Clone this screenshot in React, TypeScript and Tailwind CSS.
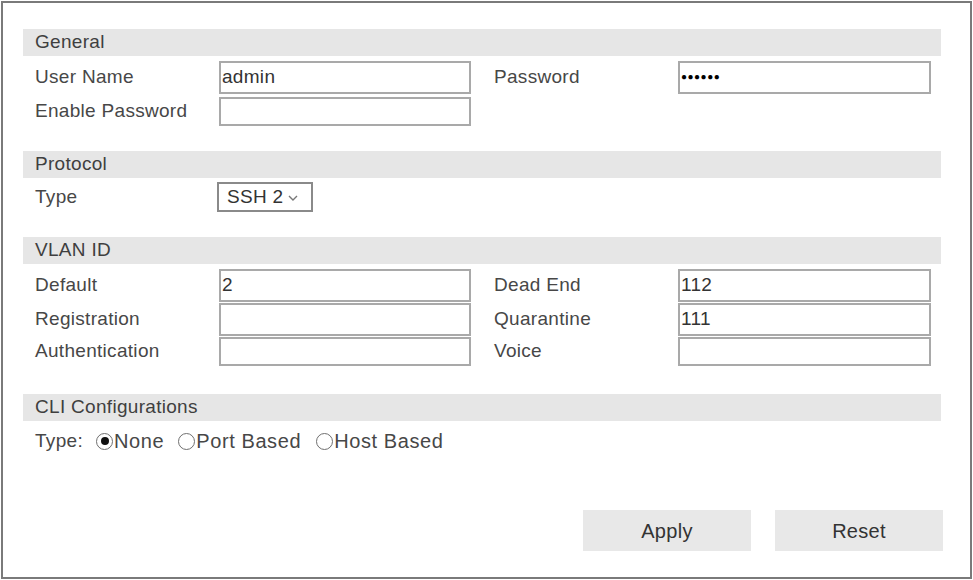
import React from "react";

const Bar = ({ title, className = "" }: { title: string; className?: string }) => (
  <div className={`h-[27px] w-[918px] bg-[#e6e6e6] pl-[12px] flex items-center text-[#3f3f3f] ${className}`}>
    {title}
  </div>
);

const Input = ({ value = "", dots = false }: { value?: string; dots?: boolean }) => (
  <div className="h-full w-full border-2 border-[#a9a9a9] bg-white flex items-center pl-[1px] text-[#333]">
    {dots ? <span className="text-[10px] tracking-[0.5px] text-black leading-none">●●●●●●</span> : value}
  </div>
);

const Row = ({
  l1,
  v1,
  l2,
  v2,
  h,
  dots,
  right = true,
}: {
  l1: string;
  v1?: string;
  l2?: string;
  v2?: string;
  h: string;
  dots?: boolean;
  right?: boolean;
}) => (
  <div className={`grid grid-cols-[184px_252px_23px_184px_253px] pl-[12px] items-center ${h}`}>
    <div>{l1}</div>
    <div className="h-full">
      <Input value={v1} />
    </div>
    <div />
    <div>{l2}</div>
    <div className="h-full">{right && <Input value={v2} dots={dots} />}</div>
  </div>
);

const Radio = ({ checked, label }: { checked?: boolean; label: string }) => (
  <div className="flex items-center">
    <span className="w-[17px] h-[17px] rounded-full border-[1.5px] border-[#6f6f6f] flex items-center justify-center bg-white">
      {checked && <span className="w-[8px] h-[8px] rounded-full bg-[#111]" />}
    </span>
    <span className="ml-[1px] text-[20px] tracking-[0.6px]">{label}</span>
  </div>
);

export default function App() {
  return (
    <div className="w-[973px] h-[580px] bg-white pt-[1px] pl-[1px] font-['Liberation_Sans',Arial,sans-serif] text-[19px] tracking-[0.3px] text-[#474747] overflow-hidden">
      <div className="w-[971px] h-[578px] border-2 border-[#7a7a7a] pt-[26px] pl-[20px] flex flex-col">
        <Bar title="General" />
        <div className="mt-[5px] flex flex-col gap-[8px]">
          <Row l1="User Name" v1="admin" l2="Password" dots h="h-[28px]" />
          <Row l1="Enable Password" h="h-[28px]" right={false} />
        </div>

        <Bar title="Protocol" className="mt-[26px]" />
        <div className="mt-[4px] pl-[12px] flex items-center h-[30px]">
          <div className="w-[182px]">Type</div>
          <div className="h-full w-[96px] border-2 border-[#8a8a8a] flex items-center pl-[8px] text-[#333]">
            <span>SSH 2</span>
            <svg className="ml-[5px] mt-[2px]" width="10" height="6" viewBox="0 0 10 6">
              <path d="M1 1 L5 5 L9 1" fill="none" stroke="#777" strokeWidth="1.4" />
            </svg>
          </div>
        </div>

        <Bar title="VLAN ID" className="mt-[25px]" />
        <div className="mt-[5px] flex flex-col gap-[5px]">
          <Row l1="Default" v1="2" l2="Dead End" v2="112" h="h-[29px]" />
          <Row l1="Registration" l2="Quarantine" v2="111" h="h-[29px]" />
          <Row l1="Authentication" l2="Voice" h="h-[29px]" />
        </div>

        <Bar title="CLI Configurations" className="mt-[28px]" />
        <div className="mt-[10px] pl-[12px] flex items-center h-[20px]">
          <span className="w-[61px]">Type:</span>
          <Radio checked label="None" />
          <span className="w-[14px]" />
          <Radio label="Port Based" />
          <span className="w-[15px]" />
          <Radio label="Host Based" />
        </div>

        <div className="mt-[59px] flex justify-end gap-[24px] pr-[27px]">
          <button className="w-[168px] h-[41px] bg-[#e8e8e8] text-[#333] text-[20px]">Apply</button>
          <button className="w-[168px] h-[41px] bg-[#e8e8e8] text-[#333] text-[20px]">Reset</button>
        </div>
      </div>
    </div>
  );
}
